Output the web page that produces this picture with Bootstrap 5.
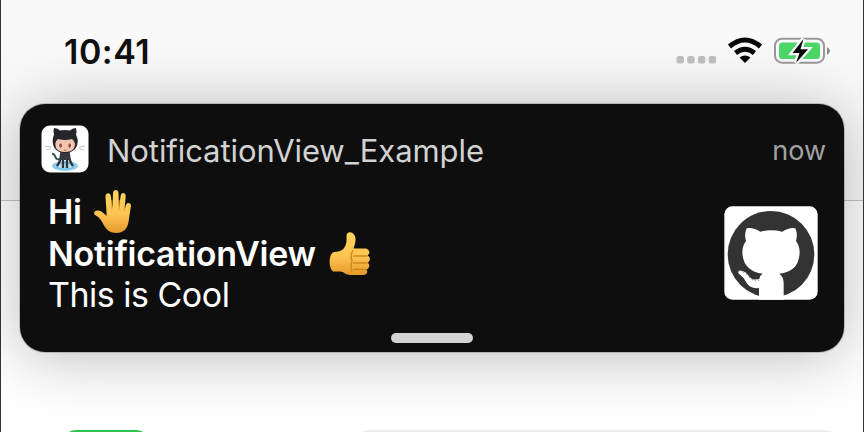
<!DOCTYPE html>
<html lang="en">
<head>
<meta charset="utf-8">
<meta name="viewport" content="width=device-width, initial-scale=1">
<title>NotificationView</title>
<link rel="stylesheet" href="https://cdn.jsdelivr.net/npm/bootstrap@5.3.0/dist/css/bootstrap.min.css">
<style>
body{font-family:Inter,"Liberation Sans",sans-serif;margin:0}
.phone{width:864px;height:432px;border-left:1px solid #333;border-right:1px solid #333}
.top-area{height:201px;background:#f9f9f9;border-bottom:1px solid #c4c4c4;padding:31px 32px 0 63px}
.clock{font-size:34px;line-height:41px;font-weight:600;letter-spacing:.5px;color:#111}
.status-icons{height:40px}
.below{padding:229px 24px 0 61px}
.green-pill{width:88px;height:40px;border-radius:14px;background:#2fc24c}
.gray-pill{width:484px;height:40px;border-radius:14px;background:#ededee}
.banner{left:19px;top:104px;width:824px;height:248px;border-radius:25px;background:#0e0e0e;color:#fff;
 box-shadow:0 0 0 1px rgba(0,0,0,.18),0 5px 65px rgba(0,0,0,.27);padding:21px 18px 0 21px}
.app-name{font-size:31px;line-height:51px;height:48px;color:#d2d2d2;letter-spacing:-.07px;margin-left:18px}
.when{font-size:27px;line-height:51px;height:48px;color:#a2a2a2}
.message{font-size:34px;line-height:41.500px;padding:18px 0 0 7px}
.message .strong-line{font-weight:600;height:41.500px;letter-spacing:-.25px}
.regular-line{letter-spacing:-.5px}
.wave{margin:-1px 0 0 12px}
.thumbs{margin:-1px 0 0 12px}
.thumb{margin:33px 8px 0 0}
.grip{width:82px;height:10px;background:#d3d3d3;left:371px;top:229px}
svg{display:block;flex:none}
</style>
</head>
<body>
<main class="phone position-relative overflow-hidden bg-white">
 <header class="top-area d-flex justify-content-between align-items-start">
  <div class="clock">10:41</div>
  <div class="status-icons d-flex">
   <svg width="156" height="40" viewBox="675 31 156 40">
    <g fill="#c0c0c0"><rect x="676.500" y="56" width="7.500" height="7.500" rx="2.500"/><rect x="687.200" y="56" width="7.500" height="7.500" rx="2.500"/><rect x="697.900" y="56" width="7.500" height="7.500" rx="2.500"/><rect x="708.600" y="56" width="7.500" height="7.500" rx="2.500"/></g>
    <g fill="none" stroke="#080808" stroke-width="5"><path d="M729.500 46.500Q745 33.500 760.500 46.500"/><path d="M735.500 53Q745 45.500 754.500 53"/></g>
    <path d="M739.500 57.500Q745 53.500 750.500 57.500L745 63Z" fill="#080808"/>
    <rect x="775" y="38.700" width="49" height="24" rx="7" fill="#fafafa" stroke="#999" stroke-width="2"/>
    <rect x="779" y="42.500" width="41" height="16.500" rx="3.500" fill="#4cd769"/>
    <path d="M827 47Q833 51 827 55Z" fill="#888"/>
    <path d="M803.500 39L792.500 53H799.500L796 63L808 49.300H800.500Z" fill="#080808" stroke="#fafafa" stroke-width="4.500" paint-order="stroke"/>
   </svg>
  </div>
 </header>
 <div class="below d-flex justify-content-between"><div class="green-pill"></div><div class="gray-pill"></div></div>

 <section class="banner position-absolute">
  <div class="d-flex">
   <svg width="48" height="48" viewBox="0 0 48 48">
    <rect x=".5" y=".5" width="47" height="47" rx="8.500" fill="#fff"/>
    <ellipse cx="24" cy="41" rx="13" ry="5" fill="#8fd0f0"/>
    <ellipse cx="24" cy="41" rx="9" ry="3" fill="#b7e1f5" stroke="#5ab2dc" stroke-width=".8"/>
    <path d="M20 29C20 34 19 37 16 41M22 29V43M26 29V43M28 29C28 34 29 37 32 41" fill="none" stroke="#30333a" stroke-width="2.300"/>
    <path d="M19 27H29L28 35H20Z" fill="#343741"/>
    <path d="M19 34Q15 35 14 31Q13 29 11 28.500" fill="none" stroke="#38545f" stroke-width="2"/>
    <path d="M13 3Q17 3 19 5.500Q24 4.500 29 5.500Q31 3 35 3Q36 7 35 9.500Q39 18 34 24Q30 28 24 28Q17 28 13.500 23Q10 17 13 9.500Q12 6 13 3Z" fill="#25252b"/>
    <path d="M17 14Q24 16 31 14Q36 18 32.500 24Q30 27 24 27Q17 27 15 23Q13 17 17 14Z" fill="#f0c5ac"/>
    <ellipse cx="19.300" cy="20.500" rx="2" ry="2.800" fill="#fbe9e2"/><ellipse cx="29" cy="20.500" rx="2" ry="2.800" fill="#fbe9e2"/>
    <ellipse cx="19.600" cy="20.600" rx="1.500" ry="2.300" fill="#a34a48"/><ellipse cx="28.700" cy="20.600" rx="1.500" ry="2.300" fill="#a34a48"/>
    <path d="M23 25Q24.200 26 25.500 25" stroke="#8a4c3d" stroke-width=".7" fill="none"/>
    <path d="M4 21L10 22M5 25L10 23.500M38 22L44 21M38 23.500L43 25" stroke="#bbb" stroke-width=".9"/>
   </svg>
   <div class="app-name">NotificationView_Example</div>
   <div class="when ms-auto">now</div>
  </div>
  <div class="d-flex justify-content-between align-items-start">
   <div class="message">
    <div class="strong-line d-flex"><span>Hi</span>
     <svg class="wave" width="38" height="44" viewBox="94 190 38 44">
      <defs><linearGradient id="skin" x1="0" y1="0" x2="0" y2="1"><stop offset="0" stop-color="#ffd45c"/><stop offset=".55" stop-color="#fdc552"/><stop offset="1" stop-color="#e79a2b"/></linearGradient></defs>
      <path d="M106.500 212L105.500 196.500C105.300 192.500 110.300 192 110.800 196L112.500 208L113 193C113.100 189 118.300 189 118.500 193L119 208L120.700 195.500C121.300 191.700 126 192.500 125.700 196.300L124.500 210L126 205C127 201.500 131.500 202.700 130.900 206.200L128.500 222C127.500 229 123 233 116.500 233C110 233 106.500 230 104 225.500C101.500 220.500 99.500 217.500 95.500 215.300C92.300 213.300 95 210 98.500 210.500C102 211 104.500 214 106.500 216Z" fill="url(#skin)"/>
      <path d="M111.800 200V210M119.200 200V210M125 205L124 211" stroke="#d99a31" stroke-width=".8" fill="none"/>
     </svg>
    </div>
    <div class="strong-line d-flex"><span>NotificationView</span>
     <svg class="thumbs" width="44" height="44" viewBox="328 231 44 44">
      <path d="M340 250C345 248 347 243 346.500 236C346 231 351 229.500 354 233.500C357 238 355 243 353.500 247.500H365C370 247.500 370.500 253 367.500 254.500C371 256 370.500 260.500 367.500 261.500C370.500 263.500 369.500 267.500 366.500 268.500C368.500 271.500 366 274 363 274H351C345 274 344 270.500 340 270.500H333C328.500 267 328.500 254 333 251.500C335 250.500 337.500 251 340 250Z" fill="url(#skin)"/>
      <path d="M353 255H367.500M353 262H367.500M353 268.500H366M353 249Q350 254 352 260Q350 266 352 271" fill="none" stroke="#cc861c" stroke-width="1.300"/>
     </svg>
    </div>
    <div class="regular-line">This is Cool</div>
   </div>
   <svg class="thumb" width="94" height="94" viewBox="27 27 282 282">
    <rect x="28" y="28" width="280" height="280" rx="24" fill="#fff"/>
    <circle cx="168" cy="172" r="130" fill="#333"/>
    <path d="M95 94Q113 90 136 104Q168 96 202 104Q224 90 241 94Q249 112 243 132Q257 151 253 176Q248 223 193 230Q206 240 206 258V308H132V273Q105 276 95 258Q86 240 70 229Q68 219 79 221Q94 223 103 239Q112 251 133 246Q134 235 143 230Q89 222 83 176Q79 151 93 132Q87 112 95 94Z" fill="#fff"/>
    <path d="M84 224L88 228M94 229L96 234M102 238L104 242M111 246L112 250M121 249V253M130 248V252" stroke="#777" stroke-width="2.500"/>
   </svg>
  </div>
  <div class="grip position-absolute rounded-pill"></div>
 </section>
</main>
<script src="https://cdn.jsdelivr.net/npm/bootstrap@5.3.0/dist/js/bootstrap.bundle.min.js"></script>
</body>
</html>
